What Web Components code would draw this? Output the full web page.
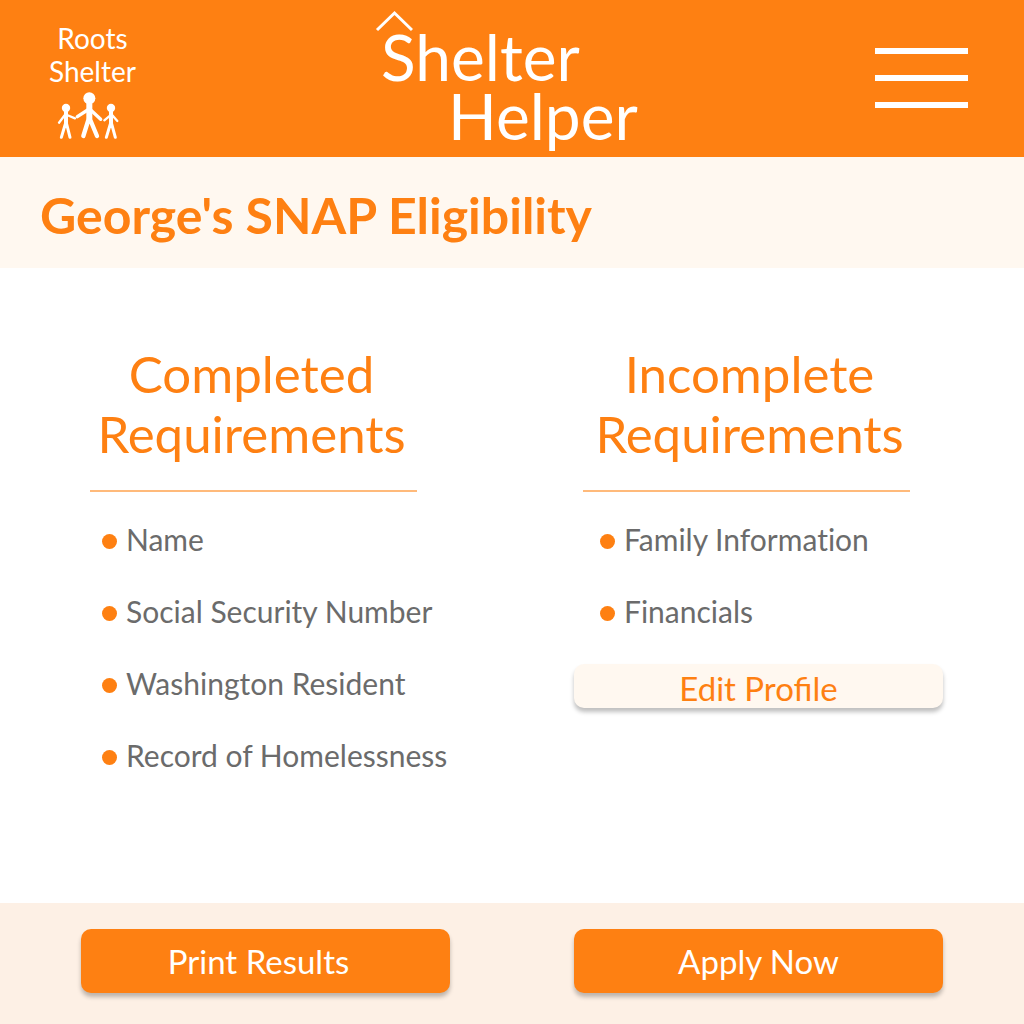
<!DOCTYPE html>
<html lang="en">
<head>
<meta charset="utf-8">
<meta name="viewport" content="width=device-width, initial-scale=1">
<title>Shelter Helper</title>
<style>
  html {
    --orange: #fe8012;
    --rule: #ffba7b;
    --cream: #fff8f0;
    --peach: #fdf0e5;
    --grey: #6b6b6b;
    --gutter: 81px;
    --column-gap: 124px;
  }
  body { margin: 0; font-family: Lato, "Open Sans", sans-serif; color: var(--grey); }
</style>
</head>
<body>
<eligibility-page></eligibility-page>

<template id="page">
  <style>
    :host { display: flex; flex-direction: column; min-height: 100vh; }
    h2 {
      margin: 0; padding: 28px 40px 23px; background: var(--cream);
      color: var(--orange); font-size: 50px; line-height: 60px; font-weight: 700;
    }
    main, footer {
      display: grid; grid-template-columns: 1fr 1fr; column-gap: var(--column-gap);
      padding: 0 var(--gutter);
    }
    main { flex: 1; padding-top: 76px; padding-bottom: 76px; background: #fff; }
    footer { background: var(--peach); padding-top: 26px; padding-bottom: 31px; }
    .lead { --label-trim: 14px; --heading-trim: 28px; }
    .second { --heading-trim: 18px; --item-indent: 26px; }
  </style>
  <site-header></site-header>
  <h2>George's SNAP Eligibility</h2>
  <main>
    <requirement-list class="lead">
      <span slot="title">Completed Requirements</span>
      <requirement-item>Name</requirement-item>
      <requirement-item>Social Security Number</requirement-item>
      <requirement-item>Washington Resident</requirement-item>
      <requirement-item>Record of Homelessness</requirement-item>
    </requirement-list>
    <requirement-list class="second">
      <span slot="title">Incomplete Requirements</span>
      <requirement-item>Family Information</requirement-item>
      <requirement-item>Financials</requirement-item>
      <action-button slot="action" quiet>Edit Profile</action-button>
    </requirement-list>
  </main>
  <footer>
    <action-button class="lead">Print Results</action-button>
    <action-button>Apply Now</action-button>
  </footer>
</template>

<template id="header">
  <style>
    :host { display: block; background: var(--orange); color: #fff; }
    header {
      display: flex; justify-content: space-between; align-items: flex-start;
      box-sizing: border-box; min-height: 157px; padding: 0 56px 0 49px;
    }
    .shelter {
      display: flex; flex-direction: column; align-items: center; padding-top: 22px;
      color: inherit; text-decoration: none; font-size: 28px; line-height: 33px; text-align: center;
    }
    .shelter svg { display: block; margin: 4px 8px 0; align-self: flex-start; }
    .shelter span { display: block; }
    h1 { position: relative; margin: 0; padding: 27px 0 0 8px; font-size: 64px; line-height: 59px; font-weight: 400; }
    h1 span { display: block; }
    h1 span + span { padding-left: 67px; }
    .roof { position: absolute; left: 2px; top: 10px; }
    button {
      display: flex; flex-direction: column; gap: 21px; width: 93px; margin: 48px 0 0; padding: 0;
      border: 0; background: none; cursor: pointer;
    }
    button i { display: block; width: 100%; height: 6px; background: #fff; }
  </style>
  <header>
    <a class="shelter" href="#">
      <div><span>Roots</span><span>Shelter</span></div>
      <svg width="63" height="48" viewBox="80 244 189 144" fill="none" stroke="#fff" stroke-linecap="round" stroke-linejoin="round" aria-hidden="true">
        <g fill="#fff" stroke="none">
          <circle cx="177" cy="263" r="18"/><circle cx="107" cy="292" r="12.5"/><circle cx="242" cy="292" r="12.5"/>
          <path d="M168 276h18v48l-9 14-9-14zM101 300h12v40l-6 8-6-8zM236 300h12v40l-6 8-6-8z"/>
        </g>
        <path stroke-width="10" d="M172 298l-31 20M182 299l29 27"/>
        <path stroke-width="13" d="M174 328l-15 48M180 328l20 48"/>
        <path stroke-width="7" d="M103 314l-17 22M110 313l24 10M239 315l-17 14M246 314l15 17"/>
        <path stroke-width="9" d="M105 340l-12 40M109 340l10 40M240 340l-12 40M244 340l11 40"/>
      </svg>
    </a>
    <h1>
      <svg class="roof" width="38" height="22" viewBox="0 0 38 22" fill="none" stroke="#fff" stroke-width="3" aria-hidden="true"><path d="M2 20L19.500 3L37 20"/></svg>
      <span>Shelter</span><span>Helper</span>
    </h1>
    <button type="button" aria-label="Menu"><i></i><i></i><i></i></button>
  </header>
</template>

<template id="list">
  <style>
    :host { display: block; }
    h3 {
      margin: 0 0 26px; padding-right: var(--heading-trim, 0px);
      color: var(--orange); font-size: 51px; line-height: 60px; font-weight: 400; text-align: center;
    }
    hr { margin: 0 33px 11px 9px; border: 0; height: 2px; background: var(--rule); }
    .items { padding-left: var(--item-indent, 21px); }
    ::slotted([slot="action"]) { margin-top: 17px; }
  </style>
  <h3><slot name="title"></slot></h3>
  <hr>
  <div class="items" role="list"><slot></slot></div>
  <slot name="action"></slot>
</template>

<template id="item">
  <style>
    :host {
      display: flex; align-items: center; gap: 9px; font-size: 30px; line-height: 72px;
      white-space: nowrap; font-variant-ligatures: none;
    }
    i { flex: none; width: 15px; height: 15px; margin-top: 5px; border-radius: 50%; background: var(--orange); }
  </style>
  <i></i><span><slot></slot></span>
</template>

<template id="action">
  <style>
    :host { display: block; }
    button {
      display: block; box-sizing: border-box; width: 100%; min-height: 64px;
      padding: 0 var(--label-trim, 0px) 0 0; border: 0; border-radius: 10px;
      background: var(--orange); color: #fff; font: inherit; font-size: 33px; line-height: 40px;
      box-shadow: 0 4px 4px rgba(0, 0, 0, .25); cursor: pointer;
    }
    :host([quiet]) button { min-height: 44px; padding-top: 4px; background: var(--cream); color: var(--orange); }
  </style>
  <button type="button"><slot></slot></button>
</template>

<script>
  const define = (name, templateId, role) => customElements.define(name, class extends HTMLElement {
    constructor() {
      super();
      this.attachShadow({ mode: "open" })
        .append(document.getElementById(templateId).content.cloneNode(true));
    }
    connectedCallback() {
      if (role) this.setAttribute("role", role);
    }
  });
  define("action-button", "action");
  define("requirement-item", "item", "listitem");
  define("requirement-list", "list");
  define("site-header", "header");
  define("eligibility-page", "page");
</script>
</body>
</html>
